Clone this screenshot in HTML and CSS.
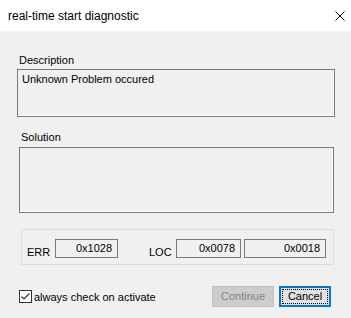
FILE: index.html
```html
<html>
	<head>
		<link rel="stylesheet" href="styles.css">
	</head>
	<body>
		<div id="titlebar">
			<span class="title">real-time start diagnostic</span>
			<svg class="close" width="10" height="10" viewBox="0 0 10 10">
				<path d="M0.5 0.5 L9.5 9.5 M9.5 0.5 L0.5 9.5" stroke="#000" stroke-width="1" fill="none"/>
			</svg>
		</div>
		<div id="content">
			<div class="label desc-label">Description</div>
			<div class="field desc-box">Unknown Problem occured</div>
			<div class="label sol-label">Solution</div>
			<div class="field sol-box"></div>
			<div class="group">
				<span class="glabel err">ERR</span>
				<span class="val err-val">0x1028</span>
				<span class="glabel loc">LOC</span>
				<span class="val loc-val">0x0078</span>
				<span class="val loc-val2">0x0018</span>
			</div>
			<div class="bottom">
				<label class="check">
					<svg width="13" height="13" viewBox="0 0 13 13">
						<rect x="0.5" y="0.5" width="12" height="12" fill="#fff" stroke="#333"/>
						<path d="M2.5 6.5 L5 9 L10.5 3.5" stroke="#333" stroke-width="1.2" fill="none"/>
					</svg>
					<span>always check on activate</span>
				</label>
				<div class="buttons">
					<div class="btn disabled">Continue</div>
					<div class="btn default"><span>Cancel</span></div>
				</div>
			</div>
		</div>
	</body>
</html>
```

FILE: styles.css
```css
body {
	margin: 0;
	width: 351px;
	height: 318px;
	background-color: #f0f0f0;
	font-family: "Liberation Sans", Arial, sans-serif;
	font-size: 11px;
	color: #000;
	overflow: hidden;
}
#titlebar {
	height: 31px;
	background-color: #fff;
	display: flex;
	align-items: center;
	justify-content: space-between;
	padding: 0 6px 0 8px;
}
#titlebar .title {
	font-size: 12px;
}
#titlebar .close {
	margin-top: 1px;
}
#content {
	display: flex;
	flex-direction: column;
	align-items: flex-start;
}
.label {
	line-height: 16px;
}
.desc-label {
	margin: 21px 0 0 19px;
}
.field {
	box-sizing: border-box;
	border: 1px solid #7a7a7a;
	box-shadow: inset -1px -1px 0 #fff;
	padding: 2px 4px;
	line-height: 15px;
}
.desc-box {
	margin: 1px 0 0 17px;
	width: 318px;
	height: 48px;
}
.sol-label {
	margin: 12px 0 0 21px;
}
.sol-box {
	margin: 2px 0 0 19px;
	width: 315px;
	height: 66px;
}
.group {
	box-sizing: border-box;
	margin: 16px 0 0 21px;
	width: 313px;
	height: 36px;
	border: 1px solid #dcdcdc;
	display: flex;
	align-items: flex-start;
	padding: 9px 0 0 5px;
}
.glabel {
	margin-top: 6px;
	line-height: 15px;
}
.err {
	width: 21px;
}
.loc {
	width: 20px;
	margin-left: 31px;
}
.val {
	box-sizing: border-box;
	height: 19px;
	border: 1px solid #7a7a7a;
	text-align: right;
	padding-right: 5px;
	line-height: 17px;
}
.err-val {
	width: 63px;
	margin-left: 7px;
}
.loc-val {
	width: 65px;
	margin-left: 7px;
}
.loc-val2 {
	width: 82px;
	margin-left: 3px;
}
.bottom {
	align-self: stretch;
	display: flex;
	justify-content: space-between;
	align-items: center;
	margin-top: 21px;
	padding: 0 20px 0 19px;
}
.check {
	display: flex;
	align-items: center;
}
.check svg {
	margin-right: 2px;
}
.buttons {
	display: flex;
	gap: 5px;
}
.btn {
	box-sizing: border-box;
	height: 21px;
	line-height: 19px;
	text-align: center;
}
.btn.disabled {
	width: 62px;
	background-color: #cccccc;
	border: 1px solid #bfbfbf;
	color: #838383;
}
.btn.default {
	width: 52px;
	background-color: #e1e1e1;
	border: 2px solid #0078d7;
	padding: 1px;
	line-height: 15px;
}
.btn.default span {
	display: block;
	border: 1px dotted #000;
	height: 15px;
	box-sizing: border-box;
	line-height: 13px;
}
```
